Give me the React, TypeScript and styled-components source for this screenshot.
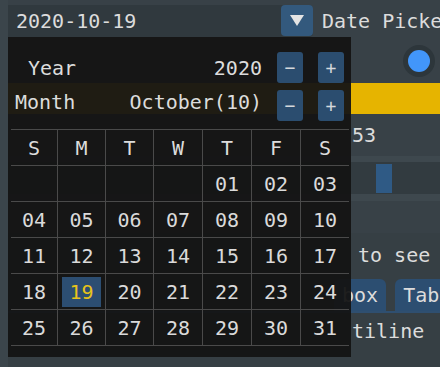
import React from 'react';
import styled, { createGlobalStyle } from 'styled-components';

const Global = createGlobalStyle`
  html, body {
    margin: 0;
    padding: 0;
    background: #394247;
  }
  body {
    font-family: "DejaVu Sans Mono", "Liberation Mono", monospace;
    font-size: 20px;
    color: #dcdcdc;
    overflow: hidden;
  }
`;

const Window = styled.div`
  position: relative;
  width: 440px;
  height: 367px;
  overflow: hidden;
  box-sizing: border-box;
  padding: 5px 0 0 8px;
  background: #3b454b;
  display: flex;
  flex-direction: column;
`;

const Content = styled.div`
  display: flex;
  flex-direction: column;
  flex: 1;
  background: #384147;
  margin-top: -5px;
  padding-top: 5px;
`;

const Row = styled.div<{ $h: number; $mt?: number; $pl?: number }>`
  display: flex;
  align-items: center;
  height: ${p => p.$h}px;
  margin-top: ${p => p.$mt ?? 0}px;
  padding-left: ${p => p.$pl ?? 0}px;
  white-space: nowrap;
  overflow: hidden;
`;

const Combo = styled.div`
  display: flex;
  flex-shrink: 0;
  width: 305px;
  height: 32px;
  background: #30393e;
  border-radius: 0 4px 4px 0;
`;

const ComboText = styled.div`
  flex: 1;
  padding-left: 8px;
  line-height: 32px;
`;

const ArrowButton = styled.div`
  width: 32px;
  height: 31px;
  background: #33597d;
  border-radius: 4px;
  display: flex;
  align-items: center;
  justify-content: center;
`;

const Label = styled.span<{ $ml?: number }>`
  margin-left: ${p => p.$ml ?? 0}px;
  flex-shrink: 0;
`;

const Radio = styled.div`
  margin-left: auto;
  margin-right: 5px;
  width: 32px;
  height: 32px;
  border-radius: 50%;
  background: #2d363b;
  display: flex;
  align-items: center;
  justify-content: center;
  &::after {
    content: '';
    width: 22px;
    height: 22px;
    border-radius: 50%;
    background: #4296fa;
  }
`;

const Bar = styled.div`
  height: 31px;
  margin-top: 6px;
  background: #e6b400;
`;

const SliderFrame = styled.div`
  height: 32px;
  margin-top: 6px;
  border-top: 6px solid #3e484e;
  border-bottom: 7px solid #3e484e;
  background: #323b40;
  display: flex;
  align-items: center;
  padding-left: 368px;
`;

const Grab = styled.div`
  width: 16px;
  height: 29px;
  background: #2f5a85;
`;

const Child = styled.div`
  margin-top: 32px;
  background: #363f44;
  display: flex;
  flex-direction: column;
  flex: 1;
`;

const TabBar = styled.div`
  display: flex;
  align-items: flex-end;
  gap: 9px;
  height: 32px;
  margin-top: 8px;
  padding-left: 326px;
  border-bottom: 2px solid #2f4f70;
  overflow: hidden;
`;

const Tab = styled.div`
  flex-shrink: 0;
  height: 32px;
  line-height: 32px;
  padding: 0 8px;
  background: #2c4e71;
  border-radius: 6px 6px 0 0;
`;

/* popup */

const Popup = styled.div`
  position: absolute;
  left: 8px;
  top: 37px;
  width: 343px;
  height: 320px;
  box-sizing: border-box;
  padding: 15px 7px 0 3px;
  background: rgba(20, 20, 20, 0.95);
  display: flex;
  flex-direction: column;
`;

const Stepper = styled.div<{ $mt?: number }>`
  display: grid;
  grid-template-columns: 1fr 26px 26px;
  column-gap: 15px;
  height: 31px;
  margin-top: ${p => p.$mt ?? 0}px;
  align-items: center;
`;

const StepLabel = styled.div<{ $pl: number; $dy?: number }>`
  display: flex;
  justify-content: space-between;
  padding-left: ${p => p.$pl}px;
  position: relative;
  top: ${p => p.$dy ?? 0}px;
  white-space: nowrap;
`;

const StepButton = styled.div`
  height: 31px;
  background: #2b4d6f;
  border-radius: 3px;
  display: flex;
  align-items: center;
  justify-content: center;
  font-size: 18px;
  color: #d4d8dc;
`;

const Table = styled.div`
  margin-top: 8px;
  display: grid;
  grid-template-columns: 46px 48px 48px 49px 49px 49px 49px;
  grid-auto-rows: 36px;
  width: 338px;
  border-bottom: 1px solid #4a4a4a;
`;

const Cell = styled.div<{ $first: boolean }>`
  border-top: 1px solid #4a4a4a;
  border-left: ${p => (p.$first ? 'none' : '1px solid #4a4a4a')};
  display: flex;
  align-items: center;
  justify-content: center;
`;

const Day = styled.span<{ $selected?: boolean }>`
  width: 39px;
  height: 30px;
  line-height: 30px;
  text-align: center;
  background: ${p => (p.$selected ? '#2c4e72' : 'transparent')};
  color: ${p => (p.$selected ? '#e8c31a' : '#dadada')};
`;

const heads = ['S', 'M', 'T', 'W', 'T', 'F', 'S'];

function buildDays(): string[] {
  const out: string[] = ['', '', '', ''];
  for (let d = 1; d <= 31; d++) out.push(String(d).padStart(2, '0'));
  return out;
}

function Step({ label, value, pl, mt, dy }: { label: string; value: string; pl: number; mt?: number; dy?: number }) {
  return (
    <Stepper $mt={mt}>
      <StepLabel $pl={pl} $dy={dy}>
        <span>{label}</span>
        <span>{value}</span>
      </StepLabel>
      <StepButton>−</StepButton>
      <StepButton>+</StepButton>
    </Stepper>
  );
}

export default function App() {
  const days = buildDays();
  return (
    <>
      <Global />
      <Window>
        <Content>
          <Row $h={32}>
            <Combo>
              <ComboText>2020-10-19</ComboText>
              <ArrowButton>
                <svg width="14" height="11" viewBox="0 0 14 11">
                  <polygon points="0,0 14,0 7,11" fill="#e4e4e4" />
                </svg>
              </ArrowButton>
            </Combo>
            <Label $ml={9}>Date Picker</Label>
          </Row>
          <Row $h={32} $mt={8}>
            <Radio />
          </Row>
          <Bar />
          <Row $h={30} $mt={6} $pl={344}>53</Row>
          <SliderFrame>
            <Grab />
          </SliderFrame>
          <Child>
            <Row $h={32} $mt={6} $pl={350}>to see</Row>
            <TabBar>
              <Tab>box</Tab>
              <Tab>Tab</Tab>
            </TabBar>
            <Row $h={32} $mt={2} $pl={344}>tiline</Row>
          </Child>
        </Content>

        <Popup>
          <Step label="Year" value="2020" pl={17} />
          <Step label="Month" value="October(10)" pl={4} mt={7} dy={-4} />
          <Table>
            {heads.map((h, i) => (
              <Cell key={'h' + i} $first={i === 0}>{h}</Cell>
            ))}
            {days.map((d, i) => (
              <Cell key={'d' + i} $first={i % 7 === 0}>
                <Day $selected={d === '19'}>{d}</Day>
              </Cell>
            ))}
          </Table>
        </Popup>
      </Window>
    </>
  );
}
